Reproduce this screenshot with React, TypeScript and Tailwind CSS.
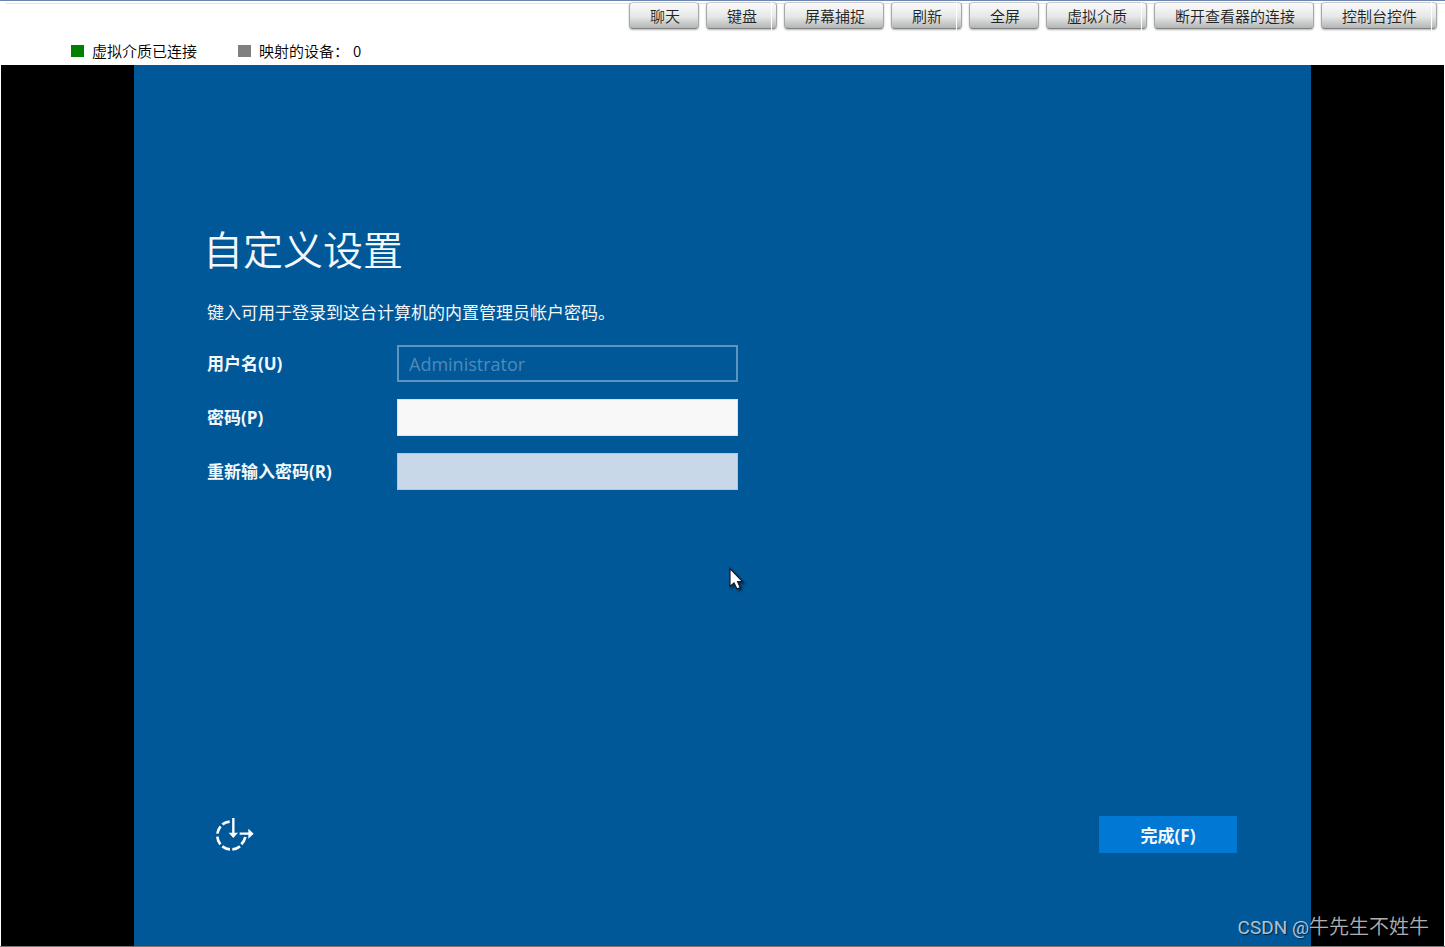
type ToolbarItem = { label: string; split?: boolean };

const toolbarItems: ToolbarItem[] = [
  { label: "聊天" },
  { label: "键盘", split: true },
  { label: "屏幕捕捉" },
  { label: "刷新", split: true },
  { label: "全屏" },
  { label: "虚拟介质", split: true },
  { label: "断开查看器的连接" },
  { label: "控制台控件", split: true },
];

function ToolbarButton({ label, split }: ToolbarItem) {
  return (
    <button
      type="button"
      className={`relative h-[27px] rounded-[4px] border border-[#a6a8a8] border-t-[#c9cbcb] border-b-[#808282] bg-linear-to-b from-[#fafafa] via-[#e6e8e7] via-55% to-[#b4b6b6] pl-5 text-[15px] leading-[25px] font-[350] whitespace-nowrap text-[#222] shadow-[0_1px_2px_rgba(0,0,0,0.3)] ${split ? "pr-[19px]" : "pr-[18px]"}`}
    >
      {label}
      {split && <span className="absolute -top-px right-1 h-[29px] w-px bg-white" />}
    </button>
  );
}

function SetupIcon() {
  return (
    <svg viewBox="2 -6 120 120" className="size-10" fill="none" stroke="#fff" aria-hidden="true">
      <g strokeWidth="8">
        <path d="M9 56A42 42 0 0 1 19 34" />
        <path d="M24 28A42 42 0 0 1 46 20" />
        <path d="M9 65A42 42 0 0 0 18 88" />
        <path d="M24 94A42 42 0 0 0 47 103" />
        <path d="M54 103A42 42 0 0 0 77 94" />
        <path d="M81 88A42 42 0 0 0 93 66" />
      </g>
      <path d="M57 9V58M76 56H110" strokeWidth="7" />
      <path d="M43 53H71L57 69Z M102 41L118 56L102 71Z" fill="#fff" stroke="none" />
    </svg>
  );
}

function Pointer() {
  return (
    <svg
      viewBox="0 0 16 24"
      className="absolute top-[502px] left-[594px] h-6 w-4 drop-shadow-[2px_2px_1px_rgba(0,0,0,0.45)]"
      aria-hidden="true"
    >
      <path
        d="M2 1.5V19.5L6 16L9 22L12.2 20.6L9.6 14.6H14.5Z"
        fill="#fff"
        stroke="#10182c"
        strokeWidth="1.2"
      />
    </svg>
  );
}

export default function App() {
  return (
    <div className="relative flex min-h-screen flex-col border-t border-[#6d84b4] bg-white font-['Noto_Sans_CJK_SC',sans-serif]">
      <header>
        <div className="ml-1.5 h-[3px] border-b border-[#e2e2ea]" />
        <div role="toolbar" className="-mt-0.5 flex justify-end gap-[7px] pr-2">
          {toolbarItems.map((item) => (
            <ToolbarButton key={item.label} {...item} />
          ))}
        </div>
        <div className="flex h-9 items-center gap-[41px] pt-2 pl-[71px] text-[15px] leading-5 font-[350] text-black">
          <div className="flex items-center gap-2">
            <span className="h-3 w-[13px] bg-[#008000]" />
            <span>虚拟介质已连接</span>
          </div>
          <div className="flex items-center gap-2">
            <span className="h-3 w-[13px] bg-[#808080]" />
            <span>映射的设备：</span>
            <span className="-ml-1">0</span>
          </div>
        </div>
      </header>

      <main className="mx-px flex grow flex-col bg-black">
        <form className="relative mx-auto flex w-full max-w-[1177px] grow flex-col bg-[#005899] pt-[155px] pr-[74px] pb-[93px] pl-[73px] font-['Open_Sans','Noto_Sans_CJK_SC',sans-serif] text-[17px] text-[#f4f8fb]">
          <h1 className="-ml-1 text-[40px] leading-[60px] font-[350]">自定义设置</h1>
          <p className="mt-[21px] leading-6">键入可用于登录到这台计算机的内置管理员帐户密码。</p>
          <div className="mt-5 grid grid-cols-[190px_minmax(0,341px)] items-center gap-y-[17px]">
            <label htmlFor="user" className="font-bold">用户名(U)</label>
            <input
              id="user"
              disabled
              value="Administrator"
              className="h-[37px] border-2 border-[#5c93bf] bg-transparent px-2.5 text-[18px] text-[#4e8bba]"
            />
            <label htmlFor="password" className="font-bold">密码(P)</label>
            <input
              id="password"
              type="password"
              className="h-[37px] border border-[#d9e4ee] bg-[#f8f8f8] px-2.5 text-black outline-none"
            />
            <label htmlFor="confirm" className="font-bold">重新输入密码(R)</label>
            <input
              id="confirm"
              type="password"
              className="h-[37px] border border-[#b0c7dc] bg-[#c8d8e8] px-2.5 text-black outline-none"
            />
          </div>
          <div className="mt-auto flex items-end justify-between">
            <button type="button" aria-label="轻松使用" className="ml-2">
              <SetupIcon />
            </button>
            <button type="button" className="h-[37px] w-[138px] bg-[#0078d4] pt-0.5 font-bold">
              完成(F)
            </button>
          </div>
          <Pointer />
        </form>
      </main>
      <div className="h-px bg-[#777]" />
      <div className="absolute right-4 bottom-1 text-[20px] leading-[30px] font-[350] text-white/70 [text-shadow:1px_1px_1px_rgba(0,0,0,0.6)] font-['Roboto','Noto_Sans_CJK_SC',sans-serif]">
        <span className="text-[19px] font-normal">CSDN @</span>牛先生不姓牛
      </div>
    </div>
  );
}
